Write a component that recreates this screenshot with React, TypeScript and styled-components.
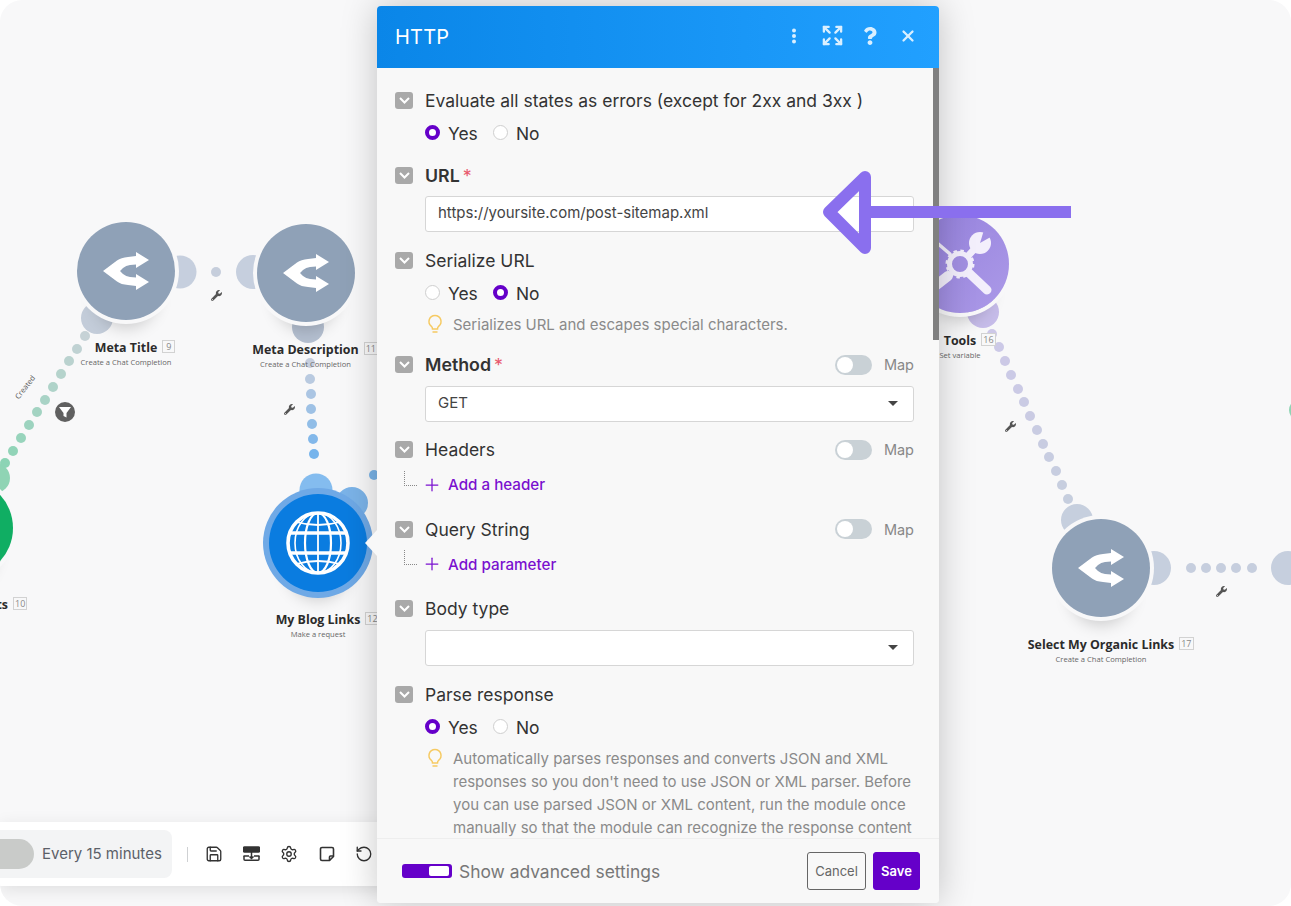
import React from "react";
import styled, { createGlobalStyle } from "styled-components";
import { Expand, X, Plus, Settings, Save, RotateCcw } from "lucide-react";
import { FaWrench, FaQuestion } from "react-icons/fa";

const Global = createGlobalStyle`
  html, body { margin: 0; padding: 0; background: #fff; }
  body { font-family: "Inter", "Liberation Sans", sans-serif; width: 1291px; height: 906px; overflow: hidden; }
  * { box-sizing: border-box; }
`;

const Canvas = styled.div`
  position: relative;
  width: 1291px;
  height: 906px;
  background: #f8f8f9;
  border-radius: 22px;
  overflow: hidden;
`;

const Wires = styled.svg`
  position: absolute;
  left: 0;
  top: 0;
`;

const NodeWrap = styled.div<{ $x: number; $y: number }>`
  position: absolute;
  left: ${(p) => p.$x - 49}px;
  top: ${(p) => p.$y - 49}px;
  width: 98px;
  display: flex;
  flex-direction: column;
  align-items: center;
`;

const Circle = styled.div<{ $bg: string; $ring?: string }>`
  width: 98px;
  height: 98px;
  flex: none;
  border-radius: 50%;
  background: ${(p) => p.$bg};
  display: flex;
  align-items: center;
  justify-content: center;
  overflow: hidden;
  box-shadow: 0 0 0 ${(p) => (p.$ring ? "6px " + p.$ring : "4px #f8f8f9")}, 0 26px 16px -18px rgba(0, 0, 0, 0.18);
`;

const NodeTitle = styled.div`
  position: relative;
  margin-top: 19.5px;
  font-family: "Open Sans", "Liberation Sans", sans-serif;
  font-weight: 700;
  font-size: 12.4px;
  line-height: 16px;
  color: #2b2b2b;
  white-space: nowrap;
`;

const NodeId = styled.span`
  position: absolute;
  left: 100%;
  top: 0;
  margin-left: 5px;
  min-width: 13px;
  height: 13px;
  padding: 0 1px;
  border: 1px solid #d2d2d2;
  font-family: "Open Sans", sans-serif;
  font-weight: 400;
  font-size: 9px;
  line-height: 11px;
  text-align: center;
  color: #888;
  background: #f8f8f9;
`;

const NodeSub = styled.div`
  font-family: "Open Sans", "Liberation Sans", sans-serif;
  font-size: 7.6px;
  line-height: 12px;
  margin-top: 0;
  color: #666;
  white-space: nowrap;
`;

const Spanner = styled(FaWrench)<{ $x: number; $y: number }>`
  position: absolute;
  left: ${(p) => p.$x - 5.5}px;
  top: ${(p) => p.$y - 5.5}px;
  width: 11px;
  height: 11px;
  color: #555;
`;

const FilterBadge = styled.div`
  position: absolute;
  left: 55px;
  top: 402px;
  width: 20px;
  height: 20px;
  border-radius: 50%;
  background: #606060;
  display: flex;
  align-items: center;
  justify-content: center;
`;

const RouteLabel = styled.div`
  position: absolute;
  left: 11px;
  top: 382px;
  font-family: "Open Sans", sans-serif;
  font-size: 7.5px;
  line-height: 10px;
  color: #555;
  transform: rotate(-52deg);
`;

const Toolbar = styled.div`
  position: absolute;
  left: 0;
  top: 822px;
  width: 400px;
  height: 64px;
  background: #fff;
  box-shadow: 0 4px 16px rgba(0, 0, 0, 0.1);
  display: flex;
  align-items: center;
`;

const Schedule = styled.div`
  width: 172px;
  height: 48px;
  margin-top: -1px;
  background: #f3f4f5;
  border-radius: 0 8px 8px 0;
  display: flex;
  align-items: center;
  gap: 8px;
  font-size: 15px;
  color: #5b6068;
  white-space: nowrap;
`;

const SchedulePill = styled.div`
  width: 34px;
  height: 30px;
  background: #c9cbc9;
  border-radius: 0 15px 15px 0;
`;

const ToolDivider = styled.div`
  width: 1px;
  height: 15px;
  margin: 0 18px 0 15px;
  background: #cfd1d3;
`;

const ToolIcons = styled.div`
  display: flex;
  gap: 21.5px;
  color: #333;
  align-items: center;
`;

const ToolIcon = styled.div`
  width: 16px;
  height: 16px;
  display: flex;
  align-items: center;
  justify-content: center;
  svg { flex: none; }
`;

const Dialog = styled.div`
  position: absolute;
  left: 377px;
  top: 6px;
  width: 562px;
  height: 897px;
  background: #f8f8f8;
  border-radius: 4px;
  box-shadow: 0 0 36px rgba(0, 0, 0, 0.22);
  display: flex;
  flex-direction: column;
`;

const Pointer = styled.div`
  position: absolute;
  left: -12px;
  top: 524px;
  width: 0;
  height: 0;
  border-top: 13px solid transparent;
  border-bottom: 13px solid transparent;
  border-right: 12px solid #f8f8f8;
`;

const Header = styled.header`
  flex: none;
  height: 62px;
  padding: 0 21px 0 18px;
  background: linear-gradient(90deg, #0a86e8, #21a0ff);
  border-radius: 4px 4px 0 0;
  color: #fff;
  display: flex;
  align-items: center;
  justify-content: space-between;
`;

const Title = styled.h1`
  margin: 0;
  font-size: 20px;
  font-weight: 400;
  letter-spacing: 0.2px;
`;

const HeaderIcons = styled.div`
  display: flex;
  gap: 18px;
  margin-top: -3px;
`;

const HeaderIcon = styled.div`
  width: 20px;
  height: 20px;
  display: flex;
  align-items: center;
  justify-content: center;
  color: #d9efff;
  svg { flex: none; }
`;

const Body = styled.div`
  position: relative;
  flex: 1;
  min-height: 0;
  overflow: hidden;
  padding: 20px 25px 0 18px;
`;

const Scrollbar = styled.div`
  position: absolute;
  right: 0;
  top: 0;
  width: 6px;
  height: 272px;
  background: #808080;
`;

const Section = styled.section<{ $gap?: number }>`
  display: grid;
  grid-template-columns: 30px 1fr;
  margin-top: ${(p) => p.$gap ?? 0}px;
`;

const Collapse = styled.div`
  width: 18px;
  height: 17px;
  align-self: center;
  border-radius: 3px;
  background: #a9a9a9;
  color: #fff;
  display: flex;
  align-items: center;
  justify-content: center;
`;

const LabelRow = styled.div`
  height: 24px;
  display: flex;
  align-items: center;
  justify-content: space-between;
`;

const Label = styled.label<{ $strong?: boolean }>`
  font-size: ${(p) => (p.$strong ? 17.8 : 17.5)}px;
  font-weight: ${(p) => (p.$strong ? 600 : 400)};
  color: #333;
  white-space: nowrap;
`;

const Req = styled.span`
  margin-left: 3px;
  font-weight: 400;
  color: #e8596d;
`;

const MapSwitch = styled.div`
  display: flex;
  align-items: center;
  gap: 12px;
  font-size: 14.5px;
  color: #888;
`;

const Track = styled.div`
  width: 37px;
  height: 20px;
  padding: 2px;
  border-radius: 10px;
  background: #c9d1d6;
`;

const Knob = styled.div`
  width: 16px;
  height: 16px;
  border-radius: 50%;
  background: #fff;
`;

const Radios = styled.div`
  grid-column: 2;
  height: 24px;
  margin-top: 9px;
  display: flex;
  align-items: center;
  font-size: 17.4px;
  color: #333;
`;

const RadioDot = styled.span<{ $on?: boolean }>`
  width: 15px;
  height: 15px;
  margin-top: -2px;
  margin-right: 8px;
  border-radius: 50%;
  background: #fff;
  border: ${(p) => (p.$on ? "4px solid #6500c9" : "1px solid #cfcfcf")};
`;

const RadioText = styled.span`
  width: 45px;
`;

const Field = styled.div`
  grid-column: 2;
  position: relative;
  height: 36px;
  margin-top: 9px;
  padding: 0 12px 3px;
  background: #fff;
  border: 1px solid #d6d6d6;
  border-radius: 3px;
  display: flex;
  align-items: center;
  font-size: 15px;
  color: #444;
`;

const Caret = styled.span`
  position: absolute;
  right: 15px;
  top: 14px;
  width: 0;
  height: 0;
  border-left: 5px solid transparent;
  border-right: 5px solid transparent;
  border-top: 5.5px solid #444;
`;

const Hint = styled.div`
  grid-column: 2;
  margin-top: 9px;
  display: grid;
  grid-template-columns: 28px 1fr;
  font-size: 15px;
  line-height: 22.9px;
  color: #8a8a8a;
`;

const Bulb = styled.svg`
  margin-left: 2px;
`;

const Connector = styled.div`
  width: 13px;
  height: 15px;
  margin: 9px 0 0 9px;
  border-left: 1px dotted #888;
  border-bottom: 1px dotted #888;
`;

const AddRow = styled.div`
  height: 24px;
  margin-top: 11px;
  display: flex;
  align-items: center;
  gap: 6px;
  font-size: 15.2px;
  font-weight: 500;
  color: #7a10cf;
`;

const AddIcon = styled(Plus)`
  flex: none;
  margin-left: -3px;
`;

const Footer = styled.footer`
  flex: none;
  height: 65px;
  padding: 0 19px 0 25px;
  border-top: 1px solid #eeeeee;
  border-radius: 0 0 4px 4px;
  display: flex;
  align-items: center;
  background: #f8f8f8;
  gap: 7px;
`;

const AdvancedToggle = styled.div`
  width: 50px;
  height: 14px;
  padding: 2px 3px;
  border-radius: 3px;
  background: #6500c9;
  display: flex;
  justify-content: flex-end;
`;

const AdvancedKnob = styled.div`
  width: 20px;
  height: 10px;
  border-radius: 2px;
  background: #fff;
`;

const AdvancedText = styled.span`
  flex: 1;
  font-size: 17.4px;
  color: #777;
`;

const Button = styled.button<{ $primary?: boolean }>`
  height: 38px;
  padding: 0;
  width: ${(p) => (p.$primary ? 47 : 59)}px;
  border-radius: 3px;
  border: 1px solid ${(p) => (p.$primary ? "#6500c9" : "#666")};
  background: ${(p) => (p.$primary ? "#6500c9" : "transparent")};
  color: ${(p) => (p.$primary ? "#fff" : "#666")};
  font-family: inherit;
  font-size: 13px;
  font-weight: ${(p) => (p.$primary ? 600 : 400)};
`;

const ArrowMark = styled.svg`
  position: absolute;
  left: 815px;
  top: 160px;
`;

const SplitIcon = () => (
  <svg width="46" height="38" viewBox="0 0 46 38" fill="#fff">
    <path d="M0 19L14 8.5Q18 5.5 25 5L33 4V0L46 8L33 16V12.5L27 13Q23 13.5 20 16L17 19L20 22Q23 24.5 27 25L33 25.5V22L46 30L33 38V34L25 33Q18 32.5 14 29.5Z" />
  </svg>
);

const GlobeIcon = () => (
  <svg width="66" height="66" viewBox="-33 -33 66 66" fill="none" stroke="#fff">
    <circle r="30" strokeWidth="3.6" />
    <ellipse rx="13" ry="30" strokeWidth="2.2" />
    <ellipse rx="23" ry="30" strokeWidth="1.6" />
    <line x1="0" y1="-30" x2="0" y2="30" strokeWidth="1.8" />
    <line x1="-29" y1="-10" x2="29" y2="-10" strokeWidth="3.6" />
    <line x1="-29" y1="10" x2="29" y2="10" strokeWidth="3.6" />
    <path d="M-22-21Q0-15 22-21M-22 21Q0 15 22 21" strokeWidth="1.8" />
  </svg>
);

const ToolsIcon = () => (
  <svg width="98" height="98" viewBox="-49 -49 98 98" fill="none">
    <g stroke="#f3effc" strokeLinecap="round">
      <line x1="-10" y1="-10" x2="-24" y2="-22" strokeWidth="3.5" />
      <line x1="-12" y1="12" x2="-30" y2="26" strokeWidth="10" />
      <line x1="9" y1="9" x2="27" y2="26" strokeWidth="9" />
      <line x1="8" y1="-8" x2="18" y2="-19" strokeWidth="7" />
    </g>
    <circle cx="20" cy="-21" r="11" fill="#f3effc" />
    <path d="M20-21L24-34L36-30Z" fill="#a28fe2" />
    <circle r="10.5" fill="#a28fe2" stroke="#f3effc" strokeWidth="5" />
    <circle r="13" stroke="#f3effc" strokeWidth="3" strokeDasharray="3.4 3.4" />
  </svg>
);

const lerp = (a: number[], b: number[], t: number) =>
  `rgb(${a.map((v, i) => Math.round(v + (b[i] - v) * t)).join(",")})`;

const wire = (pts: number[][], from: number[], to: number[]) =>
  pts.map((p, i) => ({ x: p[0], y: p[1], c: lerp(from, to, pts.length > 1 ? i / (pts.length - 1) : 0) }));

const dots = [
  ...wire(
    [[85, 336], [77, 349], [69, 361], [61, 374], [53, 387], [45, 400], [37, 412], [29, 425], [21, 438], [13, 451], [5, 463]],
    [198, 210, 214],
    [140, 212, 181],
  ),
  ...wire([[216, 272]], [198, 206, 220], [198, 206, 220]),
  ...wire(
    [[310, 363], [310, 379], [311, 394], [311, 409], [312, 424], [313, 439], [314, 454]],
    [198, 206, 222],
    [118, 180, 236],
  ),
  ...wire([[374, 475]], [122, 180, 232], [122, 180, 232]),
  ...wire(
    [[992, 334], [999, 347], [1005, 361], [1011, 375], [1018, 389], [1024, 402], [1030, 416], [1037, 430], [1043, 444], [1049, 457], [1056, 471], [1062, 485], [1068, 499]],
    [205, 200, 232],
    [198, 206, 222],
  ),
  ...wire([[1191, 568], [1206, 568], [1221, 568], [1236, 568], [1252, 568]], [198, 206, 222], [198, 206, 222]),
];

const moons = [
  { x: 180, y: 272, r: 16.5, c: "#c6cfde" },
  { x: 97, y: 318, r: 16, c: "#c3ccd9" },
  { x: 253, y: 272, r: 17, c: "#c6cfde" },
  { x: 308, y: 327, r: 16, c: "#b4bfd0" },
  { x: 1077, y: 520, r: 16, c: "#c6cfde" },
  { x: 1154, y: 568, r: 17, c: "#c6cfde" },
  { x: 1288, y: 568, r: 17, c: "#c6cfde" },
  { x: 983, y: 312, r: 16, c: "#c6bce9" },
  { x: -5, y: 478, r: 15, c: "#8fd4b4" },
  { x: 316, y: 490, r: 16.5, c: "#84bcef" },
  { x: 352, y: 503, r: 16, c: "#7bb3e8" },
  { x: 1300, y: 410, r: 11, c: "#8fd4b4" },
];

const chevron = (
  <svg width="11" height="7" viewBox="0 0 11 7" fill="none" stroke="currentColor" strokeWidth="2">
    <path d="M1 1l4.5 4.5L10 1" />
  </svg>
);

const plus = <AddIcon size={20} strokeWidth={1.5} />;

const BulbIcon = () => (
  <Bulb width="16" height="21" viewBox="0 0 16 21" fill="none" stroke="#f6ca62" strokeWidth="1.5">
    <path d="M8 1.5a6 6 0 0 1 3.6 10.8c-.8.7-1.1 1.5-1.1 2.7h-5c0-1.2-.3-2-1.1-2.7A6 6 0 0 1 8 1.5z" />
    <path d="M5.5 18h5" />
  </Bulb>
);

const MapToggle = () => (
  <MapSwitch>
    <Track>
      <Knob />
    </Track>
    Map
  </MapSwitch>
);

const YesNo = ({ yes }: { yes: boolean }) => (
  <Radios>
    <RadioDot $on={yes} />
    <RadioText>Yes</RadioText>
    <RadioDot $on={!yes} />
    <span>No</span>
  </Radios>
);

const Node = ({
  x, y, bg, ring, title, id, sub, children,
}: {
  x: number; y: number; bg: string; ring?: string; title: string; id: string; sub?: string; children: React.ReactNode;
}) => (
  <NodeWrap $x={x} $y={y}>
    <Circle $bg={bg} $ring={ring}>{children}</Circle>
    <NodeTitle>
      {title}
      <NodeId>{id}</NodeId>
    </NodeTitle>
    {sub && <NodeSub>{sub}</NodeSub>}
  </NodeWrap>
);

export default function App() {
  return (
    <Canvas>
      <Global />
      <Wires width="1291" height="906" viewBox="0 0 1291 906">
        {moons.map((m, i) => (
          <circle key={i} cx={m.x} cy={m.y} r={m.r} fill={m.c} />
        ))}
        {dots.map((d, i) => (
          <circle key={i} cx={d.x} cy={d.y} r="5" fill={d.c} />
        ))}
      </Wires>

      <Node x={126} y={271} bg="#8fa1b7" title="Meta Title" id="9" sub="Create a Chat Completion"><SplitIcon /></Node>
      <Node x={305.5} y={273} bg="#8fa1b7" title="Meta Description" id="11" sub="Create a Chat Completion"><SplitIcon /></Node>
      <Node x={-36} y={528} bg="#10ae63" title="Get Blog Posts" id="10"><span /></Node>
      <Node x={318} y={543} bg="#0a7ce0" ring="#6fa9e6" title="My Blog Links" id="12" sub="Make a request"><GlobeIcon /></Node>
      <Node x={960} y={264} bg="linear-gradient(135deg, #9480dc, #ac9ae8)" title="Tools" id="16" sub="Set variable"><ToolsIcon /></Node>
      <Node x={1101} y={568} bg="#8fa1b7" title="Select My Organic Links" id="17" sub="Create a Chat Completion"><SplitIcon /></Node>

      <Spanner $x={216} $y={295} />
      <Spanner $x={289} $y={409} />
      <Spanner $x={1010} $y={426} />
      <Spanner $x={1221} $y={591} />

      <RouteLabel>Created</RouteLabel>
      <FilterBadge>
        <svg width="12" height="11" viewBox="0 0 12 11" fill="#fff">
          <path d="M0 0h12L7.5 6v4.5L4.5 9V6z" />
        </svg>
      </FilterBadge>

      <Toolbar>
        <Schedule>
          <SchedulePill />
          Every 15 minutes
        </Schedule>
        <ToolDivider />
        <ToolIcons>
          <ToolIcon><Save size={18} strokeWidth={1.8} /></ToolIcon>
          <ToolIcon>
            <svg width="17" height="16" viewBox="0 0 17 16" fill="none" stroke="#333" strokeWidth="1.5">
              <rect x="0.5" y="1" width="16" height="5" rx="1" fill="#333" />
              <path d="M1 10v3.2a1 1 0 0 0 1 1h13a1 1 0 0 0 1-1V10" />
              <path d="M.5 10H6M11 10h5.5M8.5 6v6M6.5 10.5l2 2 2-2" />
            </svg>
          </ToolIcon>
          <ToolIcon><Settings size={18} strokeWidth={1.8} /></ToolIcon>
          <ToolIcon>
            <svg width="16" height="16" viewBox="0 0 16 16" fill="none" stroke="#333" strokeWidth="1.6" strokeLinejoin="round">
              <path d="M3 1.5h10a1.5 1.5 0 0 1 1.5 1.5v7.5l-4 4H3A1.5 1.5 0 0 1 1.5 13V3A1.5 1.5 0 0 1 3 1.5z" />
              <path d="M14.5 10h-3a1 1 0 0 0-1 1v3.5" />
            </svg>
          </ToolIcon>
          <ToolIcon><RotateCcw size={18} strokeWidth={1.8} /></ToolIcon>
        </ToolIcons>
      </Toolbar>

      <Dialog>
        <Pointer />
        <Header>
          <Title>HTTP</Title>
          <HeaderIcons>
            <HeaderIcon>
              <svg width="6" height="16" viewBox="0 0 6 16" fill="currentColor">
                <circle cx="3" cy="2.5" r="2" />
                <circle cx="3" cy="8" r="2" />
                <circle cx="3" cy="13.5" r="2" />
              </svg>
            </HeaderIcon>
            <HeaderIcon><Expand size={23} strokeWidth={2.4} /></HeaderIcon>
            <HeaderIcon><FaQuestion size={18} /></HeaderIcon>
            <HeaderIcon><X size={18} strokeWidth={3} /></HeaderIcon>
          </HeaderIcons>
        </Header>

        <Body>
          <Scrollbar />
          <Section>
            <Collapse>{chevron}</Collapse>
            <LabelRow><Label>Evaluate all states as errors (except for 2xx and 3xx )</Label></LabelRow>
            <YesNo yes />
          </Section>

          <Section $gap={18}>
            <Collapse>{chevron}</Collapse>
            <LabelRow><Label $strong>URL<Req>*</Req></Label></LabelRow>
            <Field>https://yoursite.com/post-sitemap.xml</Field>
          </Section>

          <Section $gap={16}>
            <Collapse>{chevron}</Collapse>
            <LabelRow><Label>Serialize URL</Label></LabelRow>
            <YesNo yes={false} />
            <Hint>
              <BulbIcon />
              <span>Serializes URL and escapes special characters.</span>
            </Hint>
          </Section>

          <Section $gap={16}>
            <Collapse>{chevron}</Collapse>
            <LabelRow><Label $strong>Method<Req>*</Req></Label><MapToggle /></LabelRow>
            <Field>GET<Caret /></Field>
          </Section>

          <Section $gap={16}>
            <Collapse>{chevron}</Collapse>
            <LabelRow><Label>Headers</Label><MapToggle /></LabelRow>
            <Connector />
            <AddRow>{plus}Add a header</AddRow>
          </Section>

          <Section $gap={20.5}>
            <Collapse>{chevron}</Collapse>
            <LabelRow><Label>Query String</Label><MapToggle /></LabelRow>
            <Connector />
            <AddRow>{plus}Add parameter</AddRow>
          </Section>

          <Section $gap={20.5}>
            <Collapse>{chevron}</Collapse>
            <LabelRow><Label>Body type</Label></LabelRow>
            <Field><Caret /></Field>
          </Section>

          <Section $gap={16.5}>
            <Collapse>{chevron}</Collapse>
            <LabelRow><Label>Parse response</Label></LabelRow>
            <YesNo yes />
            <Hint>
              <BulbIcon />
              <span>
                Automatically parses responses and converts JSON and XML responses so you don't need to use JSON or XML
                parser. Before you can use parsed JSON or XML content, run the module once manually so that the module
                can recognize the response content
              </span>
            </Hint>
          </Section>
        </Body>

        <Footer>
          <AdvancedToggle><AdvancedKnob /></AdvancedToggle>
          <AdvancedText>Show advanced settings</AdvancedText>
          <Button>Cancel</Button>
          <Button $primary>Save</Button>
        </Footer>
      </Dialog>

      <ArrowMark width="260" height="100" viewBox="815 160 260 100" fill="none" stroke="#8a6fee" strokeLinejoin="round">
        <path d="M865 177L829 212L865 248Z" strokeWidth="12" />
        <line x1="866" y1="212" x2="1071" y2="212" strokeWidth="12" />
      </ArrowMark>
    </Canvas>
  );
}
